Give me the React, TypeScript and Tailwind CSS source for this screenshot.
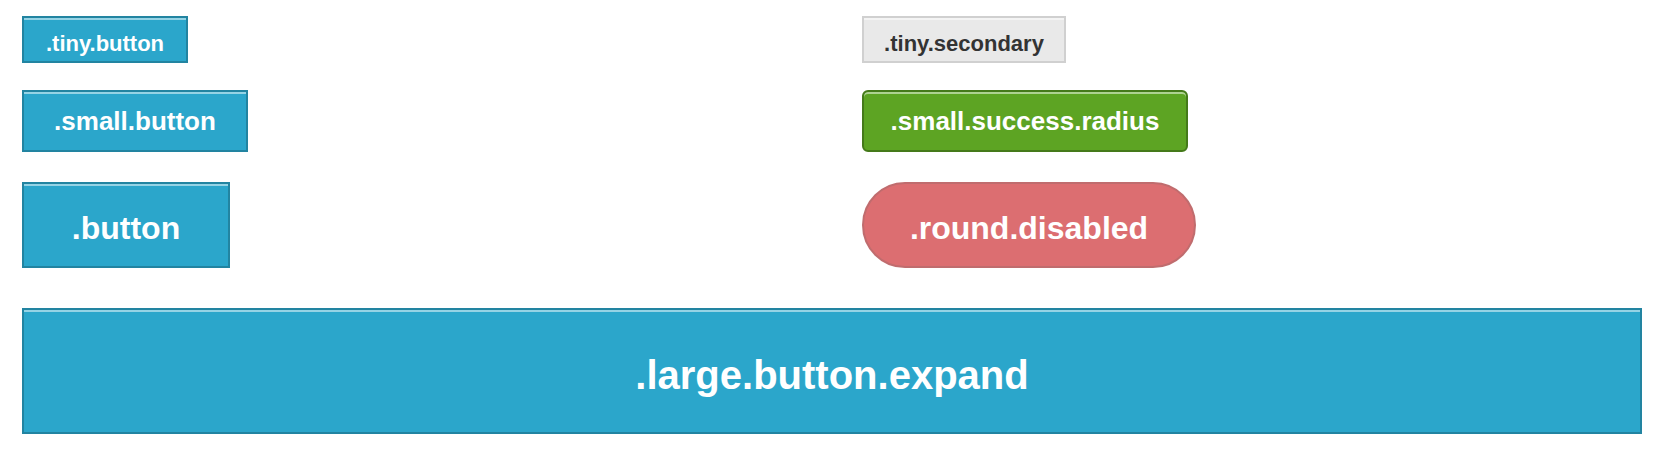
const font = { fontFamily: '"Liberation Sans", Arial, sans-serif' };

const base = "flex items-center justify-center font-bold border-2";
const shine = "shadow-[inset_0_2px_0_rgba(255,255,255,0.5)]";
const primary = `bg-[#2ba6cb] border-[#2284a1] text-white ${shine}`;

export default function App() {
  return (
    <div className="bg-white min-h-[456px] pt-[16px] pl-[22px] pr-[18px]" style={font}>
      <div className="grid grid-cols-[840px_1fr]">
        <div className="flex flex-col">
          <button className={`${base} ${primary} w-[166px] h-[47px] pt-[7px] text-[22px]`}>
            .tiny.button
          </button>
          <button className={`${base} ${primary} mt-[27px] w-[226px] h-[62px] pt-[1px] text-[26px]`}>
            .small.button
          </button>
          <button className={`${base} ${primary} mt-[30px] w-[208px] h-[86px] pt-[6px] text-[32px]`}>
            .button
          </button>
        </div>
        <div className="flex flex-col">
          <button
            className={`${base} ${shine} bg-[#e9e9e9] border-[#d0d0d0] text-[#333333] w-[204px] h-[47px] pt-[7px] text-[22px]`}
          >
            .tiny.secondary
          </button>
          <button
            className={`${base} ${shine} bg-[#5da423] border-[#457a1a] text-white rounded-[6px] mt-[27px] w-[326px] h-[62px] pt-[1px] text-[26px]`}
          >
            .small.success.radius
          </button>
          <button
            disabled
            className={`${base} bg-[#c60f13] border-[#970b0e] text-white opacity-60 rounded-full mt-[30px] w-[334px] h-[86px] pt-[6px] text-[32px]`}
          >
            .round.disabled
          </button>
        </div>
      </div>
      <button className={`${base} ${primary} mt-[40px] w-full h-[126px] pt-[8px] text-[40px]`}>
        .large.button.expand
      </button>
    </div>
  );
}
